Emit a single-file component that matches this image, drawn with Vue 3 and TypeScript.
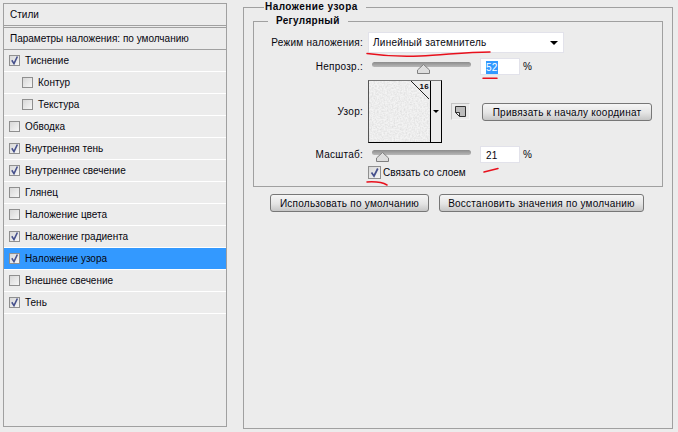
<script setup lang="ts">
/** Layer style dialog: effects list on the left, pattern overlay settings on the right. */
const effects = [
  { label: "Тиснение", on: true },
  { label: "Контур", on: false, sub: true },
  { label: "Текстура", on: false, sub: true },
  { label: "Обводка", on: false },
  { label: "Внутренняя тень", on: true },
  { label: "Внутреннее свечение", on: true },
  { label: "Глянец", on: false },
  { label: "Наложение цвета", on: false },
  { label: "Наложение градиента", on: true },
  { label: "Наложение узора", on: true, active: true },
  { label: "Внешнее свечение", on: false },
  { label: "Тень", on: true },
];
</script>

<template>
  <div class="dialog">
    <aside class="styles">
      <div class="styles-title">Стили</div>
      <div class="styles-defaults">Параметры наложения: по умолчанию</div>
      <div
        v-for="fx in effects"
        :key="fx.label"
        :class="['effect', { sub: fx.sub, active: fx.active }]"
      >
        <span class="check">
          <svg v-if="fx.on" width="11" height="11" viewBox="0 0 11 11">
            <path d="M2.8 5.2 L5 8.6 L8.4 1.5" fill="none" stroke="#46508c" stroke-width="1.6" />
          </svg>
        </span>
        <span>{{ fx.label }}</span>
      </div>
    </aside>

    <fieldset class="outer">
      <legend class="outer-legend">Наложение узора</legend>
      <fieldset class="inner">
        <legend class="inner-legend">Регулярный</legend>

        <div class="row row-mode">
          <label class="lbl">Режим наложения:</label>
          <div class="select">
            <span>Линейный затемнитель</span>
            <i class="arrow"></i>
          </div>
        </div>

        <div class="row row-opacity">
          <label class="lbl">Непрозр.:</label>
          <div class="slider">
            <svg class="thumb thumb-opacity" width="13" height="10" viewBox="0 0 13 10">
              <path d="M6.5 .5 L12.5 6 V9.5 H.5 V6 Z" fill="#dedede" stroke="#808080" />
            </svg>
          </div>
          <div class="num"><span class="sel">52</span></div>
          <span class="pct">%</span>
        </div>

        <div class="row row-pattern">
          <label class="lbl">Узор:</label>
          <div class="swatch">
            <div class="noise">
              <svg width="60" height="60">
                <filter id="grain">
                  <feTurbulence type="fractalNoise" baseFrequency="0.6" numOctaves="2" seed="4" />
                  <feColorMatrix
                    type="matrix"
                    values="0 0 0 0 0.7  0 0 0 0 0.7  0 0 0 0 0.7  1.5 0 0 0 -0.5"
                  />
                </filter>
                <rect width="60" height="60" fill="#f3f3f3" />
                <rect width="60" height="60" filter="url(#grain)" />
                <path d="M42 0 L60 18 V0 Z" fill="#ececec" />
                <path d="M42 0 L60 18" stroke="#222" stroke-width="1" />
              </svg>
              <span class="size">16</span>
            </div>
            <div class="swatch-menu"><i class="arrow arrow-small"></i></div>
          </div>
          <div class="icon-btn">
            <svg width="13" height="13" viewBox="0 0 13 13">
              <path d="M1.5 1.5 H11.5 V11.5 H5.5 V7.5 H1.5 Z" fill="#bdbdbd" stroke="#333" stroke-width="1" />
              <path d="M1.5 7.5 L5.5 11.5" stroke="#333" stroke-width="1" />
            </svg>
          </div>
          <button class="btn btn-snap">Привязать к началу координат</button>
        </div>

        <div class="row row-scale">
          <label class="lbl">Масштаб:</label>
          <div class="slider">
            <svg class="thumb thumb-scale" width="13" height="10" viewBox="0 0 13 10">
              <path d="M6.5 .5 L12.5 6 V9.5 H.5 V6 Z" fill="#dedede" stroke="#808080" />
            </svg>
          </div>
          <div class="num"><span>21</span></div>
          <span class="pct">%</span>
        </div>

        <div class="row row-link">
          <span class="lbl"></span>
          <span class="check check-link">
            <svg width="11" height="11" viewBox="0 0 11 11">
              <path d="M2.5 5.5 L5 9 L8.8 1.5" fill="none" stroke="#46508c" stroke-width="1.7" />
            </svg>
          </span>
          <span class="link-text">Связать со слоем</span>
        </div>
      </fieldset>

      <div class="actions">
        <button class="btn btn-default">Использовать по умолчанию</button>
        <button class="btn btn-restore">Восстановить значения по умолчанию</button>
      </div>
    </fieldset>

    <!-- red marker strokes drawn over the screenshot -->
    <svg class="marks" width="678" height="432">
      <g fill="none" stroke="#e8101c" stroke-width="1.5" stroke-linecap="round">
        <path d="M367 53.5 C385 56 400 57 420 56 C445 55 465 52 490 52" />
        <path d="M483 78.3 H497" />
        <path d="M484 172 L498 168.5" />
        <path d="M367 182 C375 181.5 382 182 387 185" />
      </g>
    </svg>
  </div>
</template>

<style scoped>
.dialog {
  position: relative;
  display: flex;
  align-items: flex-start;
  width: 678px;
  height: 432px;
  overflow: hidden;
  background: #ececec;
  color: #06060e;
  font: 10px/13px "Liberation Sans", sans-serif;
}

/* left column */
.styles {
  box-sizing: border-box;
  flex: none;
  width: 224px;
  height: 424px;
  margin: 3px 0 0 3px;
  border: 1px solid #a0a0a0;
}
.styles-title {
  height: 21px;
  padding: 0 6px;
  line-height: 21px;
  border-bottom: 1px solid #a0a0a0;
}
.styles-defaults {
  height: 21px;
  margin-top: 1px;
  padding: 0 6px;
  line-height: 21px;
  border-top: 1px solid #a0a0a0;
  border-bottom: 1px solid #a0a0a0;
}
.effect {
  display: flex;
  align-items: center;
  gap: 5px;
  box-sizing: border-box;
  height: 22px;
  padding-left: 5px;
  border-bottom: 1px solid #fff;
}
.effect.sub {
  padding-left: 18px;
}
.effect.active {
  background: #3399ff;
}
.check {
  box-sizing: border-box;
  flex: none;
  display: flex;
  align-items: center;
  justify-content: center;
  width: 11px;
  height: 11px;
  border: 1px solid #8f8f8f;
  background: linear-gradient(135deg, #d8d8d8, #f6f6f6);
}
.check svg {
  flex: none;
}

/* right column */
.outer {
  box-sizing: border-box;
  flex: none;
  width: 430px;
  height: 429px;
  margin: 0 0 0 16px;
  padding: 0 9px;
  border: 1px solid #a0a0a0;
  min-width: 0;
  letter-spacing: 0.25px;
}
.outer-legend {
  margin-left: 11px;
  padding: 0 8px 0 1px;
  font-weight: bold;
  line-height: 14px;
  letter-spacing: 0.45px;
}
.inner {
  box-sizing: border-box;
  height: 173px;
  margin: 0;
  padding: 4px 0 0;
  border: 1px solid #a0a0a0;
  min-width: 0;
}
.inner-legend {
  margin-left: 14px;
  padding: 0 8px;
  font-weight: bold;
  line-height: 14px;
  letter-spacing: 0.3px;
}
.row {
  display: flex;
  align-items: center;
}
.lbl {
  flex: none;
  width: 109px;
  margin-right: 5px;
  text-align: right;
}
.row-mode {
  height: 21px;
}
.select {
  box-sizing: border-box;
  display: flex;
  align-items: center;
  justify-content: space-between;
  width: 196px;
  height: 21px;
  padding: 0 4px;
  background: #fff;
  border: 1px solid #e2e2ea;
}
.arrow {
  width: 0;
  height: 0;
  margin-right: 1px;
  border: 4px solid transparent;
  border-top: 4px solid #000;
  border-bottom: 0;
}
.arrow-small {
  margin: 0;
  border-width: 3px 3px 0;
}
.row-opacity {
  height: 17px;
  margin-top: 5px;
}
.slider {
  position: relative;
  flex: none;
  box-sizing: border-box;
  width: 99px;
  height: 5px;
  margin: -4px 9px 0 4px;
  border-radius: 3px;
  background: linear-gradient(#8c8c8c, #b8b8b8);
}
.thumb {
  position: absolute;
  top: 2px;
  display: block;
}
.thumb-opacity {
  left: 45px;
}
.thumb-scale {
  left: 4px;
}
.num {
  box-sizing: border-box;
  flex: none;
  width: 40px;
  height: 17px;
  padding: 2px 0 0 5px;
  background: #fff;
  border: 1px solid #e2e2ea;
}
.sel {
  display: inline-block;
  background: #3399ff;
  color: #fff;
}
.pct {
  margin-left: 3px;
}
.row-pattern {
  align-items: flex-start;
  height: 63px;
  margin-top: 5px;
}
.row-pattern .lbl {
  margin-top: 25px;
}
.swatch {
  box-sizing: border-box;
  flex: none;
  display: flex;
  width: 74px;
  height: 63px;
  border: 1px solid #000;
  border-top-color: #777;
  border-left-color: #555;
}
.noise {
  position: relative;
  width: 61px;
  height: 61px;
  border-right: 1px solid #000;
  overflow: hidden;
}
.noise svg {
  display: block;
  width: 61px;
  height: 61px;
}
.size {
  position: absolute;
  top: 1px;
  right: 1px;
  font-size: 8px;
  line-height: 10px;
  font-weight: bold;
}
.swatch-menu {
  flex: 1;
  display: flex;
  align-items: center;
  justify-content: center;
}
.icon-btn {
  box-sizing: border-box;
  flex: none;
  display: flex;
  align-items: center;
  justify-content: center;
  width: 19px;
  height: 17px;
  margin: 23px 0 0 9px;
  background: #ebebeb;
  border: 1px solid;
  border-color: #c4c4c4 #f4f4f4 #f4f4f4 #c4c4c4;
}
.btn {
  box-sizing: border-box;
  flex: none;
  height: 18px;
  padding: 0;
  font: inherit;
  letter-spacing: inherit;
  color: inherit;
  border: 1px solid #777;
  border-radius: 3px;
  background: linear-gradient(#f6f6f6, #e4e4e4 55%, #c6c6c6);
}
.btn-snap {
  width: 170px;
  margin: 23px 0 0 12px;
}
.row-scale {
  height: 17px;
  margin-top: 3px;
}
.row-link {
  height: 13px;
  margin-top: 3px;
}
.check-link {
  width: 13px;
  height: 13px;
  margin-right: 2px;
}
.link-text {
  letter-spacing: 0;
}
.actions {
  display: flex;
  gap: 10px;
  margin: 7px 0 0 17px;
}
.btn-default {
  width: 159px;
}
.btn-restore {
  width: 205px;
}

.marks {
  position: absolute;
  inset: 0;
  pointer-events: none;
}
</style>
